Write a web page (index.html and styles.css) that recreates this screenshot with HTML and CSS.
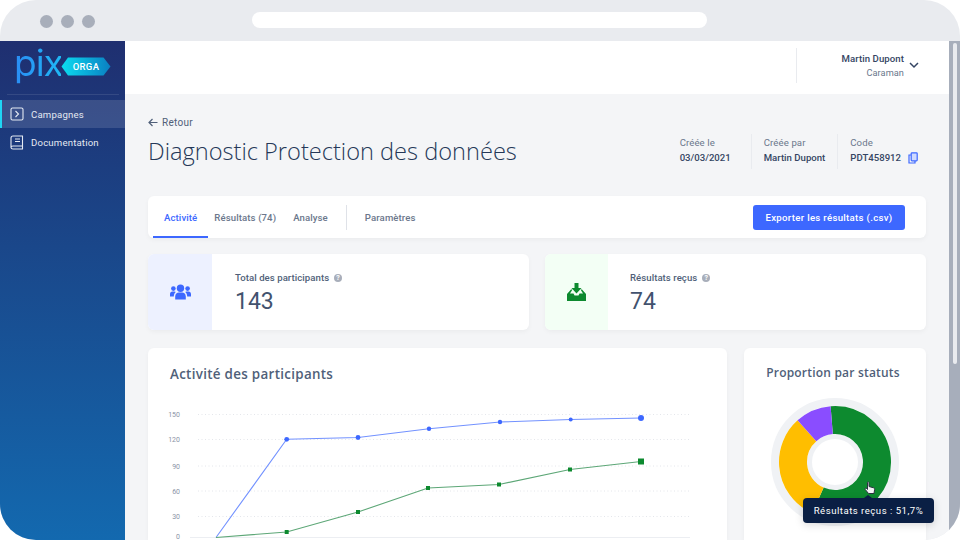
FILE: index.html
```html
<!DOCTYPE html>
<html lang="fr">
<head>
    <meta charset="UTF-8">
    <title>Pix Orga</title>
    <link rel="stylesheet" href="styles.css">
</head>
<body>
    <div class="window">
        <!-- Browser bar -->
        <div class="titlebar">
            <div class="dots">
                <span class="dot"></span>
                <span class="dot"></span>
                <span class="dot"></span>
            </div>
            <div class="address"></div>
        </div>

        <div class="app">
            <!-- Sidebar -->
            <nav class="sidebar">
                <div class="logo">
                    <span class="logo-pix">pix</span>
                    <span class="logo-badge">
                        <svg class="logo-hex" width="50" height="19" viewBox="0 0 50 19">
                            <defs>
                                <linearGradient id="hexGrad" x1="0" y1="0" x2="1" y2="0">
                                    <stop offset="0" stop-color="#0bdcf0"/>
                                    <stop offset="1" stop-color="#0a7fc2"/>
                                </linearGradient>
                            </defs>
                            <path d="M7 0.5H42.5L49.5 9.5L42.5 18.5H7L0.5 9.5Z" fill="url(#hexGrad)"/>
                        </svg>
                        <span class="logo-orga">ORGA</span>
                    </span>
                </div>
                <div class="side-sep"></div>
                <a class="side-link active">
                    <svg width="14" height="14" viewBox="0 0 14 14" fill="none" stroke="#e4e9f2" stroke-width="1.1">
                        <rect x="1" y="1" width="12" height="12" rx="1.5"/>
                        <path d="M5.5 4L8.5 7L5.5 10"/>
                    </svg>
                    Campagnes
                </a>
                <a class="side-link">
                    <svg width="14" height="15" viewBox="0 0 14 15" fill="none" stroke="#e4e9f2" stroke-width="1.1">
                        <path d="M3 1H12.5V11H3C1.8 11 1 11.8 1 12.5S1.8 14 3 14H12.5V11M1 12.5V3C1 1.8 1.8 1 3 1"/>
                        <path d="M5 4H10M5 6.5H10"/>
                    </svg>
                    Documentation
                </a>
            </nav>

            <div class="main">
                <!-- Top header -->
                <header class="topbar">
                    <div class="user">
                        <div class="user-text">
                            <div class="user-name">Martin Dupont</div>
                            <div class="user-org">Caraman</div>
                        </div>
                        <svg width="10" height="7" viewBox="0 0 10 7" fill="none" stroke="#344563" stroke-width="1.5">
                            <path d="M1 1L5 5L9 1"/>
                        </svg>
                    </div>
                </header>

                <div class="content">
                    <a class="back">
                        <svg width="10" height="9" viewBox="0 0 10 9" fill="none" stroke="#505f79" stroke-width="1.2">
                            <path d="M9.5 4.5H1M4.5 1L1 4.5L4.5 8"/>
                        </svg>
                        Retour
                    </a>

                    <div class="page-head">
                        <h1>Diagnostic Protection des données</h1>
                        <div class="meta">
                            <div class="meta-item">
                                <div class="meta-label">Créée le</div>
                                <div class="meta-value">03/03/2021</div>
                            </div>
                            <div class="meta-item">
                                <div class="meta-label">Créée par</div>
                                <div class="meta-value">Martin Dupont</div>
                            </div>
                            <div class="meta-item">
                                <div class="meta-label">Code</div>
                                <div class="meta-value">PDT458912
                                    <svg class="copy" width="10" height="12" viewBox="0 0 10 12" fill="none" stroke="#3d68ff" stroke-width="1.2">
                                        <rect x="3.2" y="0.8" width="6" height="8" rx="0.8" fill="#cfdaff"/>
                                        <path d="M3 3H1V11H7V9"/>
                                    </svg>
                                </div>
                            </div>
                        </div>
                    </div>

                    <!-- Tabs -->
                    <div class="tabs card">
                        <a class="tab active">Activité</a>
                        <a class="tab">Résultats (74)</a>
                        <a class="tab">Analyse</a>
                        <span class="tab-sep"></span>
                        <a class="tab">Paramètres</a>
                        <button class="export">Exporter les résultats (.csv)</button>
                    </div>

                    <!-- Stats -->
                    <div class="stats">
                        <div class="stat card">
                            <div class="stat-icon blue">
                                <svg width="21" height="16" viewBox="0 0 21 16" fill="#3d68ff">
                                    <circle cx="10.5" cy="4.2" r="3.7"/>
                                    <circle cx="3.4" cy="4.6" r="2.3"/>
                                    <circle cx="17.6" cy="4.6" r="2.3"/>
                                    <path d="M5.2 15.5V12.5C5.2 10 7 8.6 8.8 8.6H12.2C14 8.6 15.8 10 15.8 12.5V15.5Z"/>
                                    <path d="M0 12.6V10.2C0 8.6 1 7.6 2.4 7.6H4.5C5 7.6 5.5 7.8 5.8 8.1C4.6 9 3.9 10.4 3.8 12.6Z"/>
                                    <path d="M21 12.6V10.2C21 8.6 20 7.6 18.6 7.6H16.5C16 7.6 15.5 7.8 15.2 8.1C16.4 9 17.1 10.4 17.2 12.6Z"/>
                                </svg>
                            </div>
                            <div class="stat-body">
                                <div class="stat-label">Total des participants <span class="help">?</span></div>
                                <div class="stat-value">143</div>
                            </div>
                        </div>
                        <div class="stat card">
                            <div class="stat-icon green">
                                <svg width="19" height="18" viewBox="0 0 19 18" fill="#0d8a2f">
                                    <path d="M7.5 0H11.5V5H14.5L9.5 10.5L4.5 5H7.5Z"/>
                                    <path d="M4 6.5H5.5L3 10.5H6.5L7.5 12.5H11.5L12.5 10.5H16L13.5 6.5H15L19 11V18H0V11Z"/>
                                </svg>
                            </div>
                            <div class="stat-body">
                                <div class="stat-label">Résultats reçus <span class="help">?</span></div>
                                <div class="stat-value">74</div>
                            </div>
                        </div>
                    </div>

                    <!-- Charts -->
                    <div class="charts">
                        <div class="chart-card card">
                            <h2>Activité des participants</h2>
                            <svg class="line-chart" width="579" height="192" viewBox="148 348 579 192">
                                <g class="grid">
                                    <line x1="198" y1="414.5" x2="690" y2="414.5"/>
                                    <line x1="198" y1="439.5" x2="690" y2="439.5"/>
                                    <line x1="198" y1="466" x2="690" y2="466"/>
                                    <line x1="198" y1="491" x2="690" y2="491"/>
                                    <line x1="198" y1="516.5" x2="690" y2="516.5"/>
                                </g>
                                <line x1="190" y1="537.5" x2="690" y2="537.5" stroke="#eceef2"/>
                                <g class="ticks">
                                    <text x="180" y="417">150</text>
                                    <text x="180" y="442">120</text>
                                    <text x="180" y="469">90</text>
                                    <text x="180" y="494">60</text>
                                    <text x="180" y="519">30</text>
                                    <text x="180" y="539">0</text>
                                </g>
                                <polyline class="line-blue" points="216,537.5 286.7,439.3 358,437.5 429,428.7 500,422 570.7,419.5 641,418"/>
                                <polyline class="line-green" points="216,537.5 286.7,532 358,512 428,488 499,484.5 570,469.5 641,461.5"/>
                                <g fill="#3d68ff">
                                    <circle cx="286.7" cy="439.3" r="2.4"/>
                                    <circle cx="358" cy="437.5" r="2.4"/>
                                    <circle cx="429" cy="428.7" r="2.2"/>
                                    <circle cx="500" cy="422" r="2.2"/>
                                    <circle cx="570.7" cy="419.5" r="2"/>
                                    <circle cx="641" cy="418" r="3"/>
                                </g>
                                <g fill="#0d8a2f">
                                    <rect x="284.7" y="530" width="4" height="4"/>
                                    <rect x="356" y="510" width="4" height="4"/>
                                    <rect x="426" y="486" width="4" height="4"/>
                                    <rect x="497" y="482.5" width="4" height="4"/>
                                    <rect x="568" y="467.5" width="4" height="4"/>
                                    <rect x="638" y="458.5" width="6" height="6"/>
                                </g>
                            </svg>
                        </div>
                        <div class="donut-card card">
                            <h3>Proportion par statuts</h3>
                            <svg class="donut" width="128" height="128" viewBox="-64 -64 128 128">
                                <circle r="60" fill="none" stroke="#f0f2f5" stroke-width="8"/>
                                <circle r="25.5" fill="none" stroke="#eff1f4" stroke-width="5"/>
                                <g fill="none" stroke-width="28" transform="rotate(-94.5)">
                                    <circle r="42" pathLength="360" stroke="#0d8a2f" stroke-dasharray="208.5 151.5"/>
                                    <circle r="42" pathLength="360" stroke="#ffbe00" stroke-dasharray="114 246" stroke-dashoffset="-208.5"/>
                                    <circle r="42" pathLength="360" stroke="#8a4dff" stroke-dasharray="37.5 322.5" stroke-dashoffset="-322.5"/>
                                </g>
                            </svg>
                            <svg class="pointer" width="12" height="14" viewBox="0 0 12 14">
                                <path d="M3.5 1.5C3.5 0.6 5 0.6 5 1.5V5.5L9.5 6.8C10.5 7.1 10.8 7.8 10.6 8.6L10 12.5H4.5L1.2 8.4C0.7 7.6 1.7 6.8 2.4 7.4L3.5 8.4Z" fill="#f4f5f7" stroke="#2a3140" stroke-width="1"/>
                            </svg>
                            <div class="tooltip">Résultats reçus : 51,7%</div>
                        </div>
                    </div>
                </div>
            </div>

            <div class="scrollbar"><div class="thumb"></div></div>
        </div>
    </div>
</body>
</html>
```

FILE: styles.css
```css
/* Global styles */
body {
    margin: 0;
    width: 960px;
    height: 540px;
    overflow: hidden;
    background-color: white;
    font-family: Roboto, "Liberation Sans", sans-serif;
    color: #344563;
}

.window {
    width: 960px;
    height: 540px;
    border-radius: 36px;
    overflow: hidden;
    background-color: #e9ebef;
    display: flex;
    flex-direction: column;
}

/* Browser bar */
.titlebar {
    height: 41px;
    flex-shrink: 0;
    display: flex;
    align-items: center;
    padding-left: 40px;
}

.dots {
    display: flex;
    gap: 8px;
    width: 212px;
    margin-top: 1px;
}

.dot {
    width: 13px;
    height: 13px;
    border-radius: 50%;
    background-color: #a8aeba;
}

.address {
    width: 455px;
    height: 16px;
    margin-top: -1px;
    border-radius: 8px;
    background-color: white;
}

.app {
    flex: 1;
    display: flex;
    min-height: 0;
}

/* Sidebar */
.sidebar {
    width: 125px;
    flex-shrink: 0;
    background: linear-gradient(180deg, #1f2f70 0%, #1369af 100%);
    color: #e4e9f2;
}

.logo {
    height: 48px;
    display: flex;
    align-items: center;
    padding-left: 14px;
}

.logo-pix {
    font-family: Inter, sans-serif;
    font-weight: 400;
    font-size: 37px;
    line-height: 42px;
    letter-spacing: -1px;
    width: 47px;
    margin-top: -4px;
    background: linear-gradient(90deg, #2a8cf5 0%, #1fb8f5 100%);
    -webkit-background-clip: text;
    background-clip: text;
    color: transparent;
}

.logo-badge {
    position: relative;
    width: 50px;
    height: 19px;
    margin-top: 3px;
}

.logo-hex {
    display: block;
}

.logo-orga {
    position: absolute;
    inset: 0;
    text-align: center;
    font-size: 9.5px;
    line-height: 19px;
    font-weight: 500;
    letter-spacing: 0.3px;
    color: white;
}

.side-sep {
    height: 1px;
    margin: 5px 6px 5px 7px;
    background-color: rgba(255, 255, 255, 0.1);
}

.side-link {
    height: 28px;
    display: flex;
    align-items: center;
    gap: 7px;
    padding-left: 10px;
    font-size: 9.6px;
    letter-spacing: 0.18px;
}

.side-link.active {
    background-color: rgba(255, 255, 255, 0.13);
    border-left: 2px solid #1fd6f5;
    padding-left: 8px;
}

/* Main area */
.main {
    flex: 1;
    min-width: 0;
    background-color: #f4f5f7;
    overflow: hidden;
}

.topbar {
    height: 53px;
    background-color: white;
    display: flex;
    justify-content: flex-end;
}

.user {
    width: 153px;
    margin-top: 7px;
    height: 35px;
    border-left: 1px solid #e9ebef;
    display: flex;
    align-items: center;
    justify-content: flex-end;
    gap: 5px;
    padding-right: 30px;
    box-sizing: border-box;
}

.user-text {
    text-align: right;
    font-size: 9.6px;
    letter-spacing: 0.07px;
    margin-top: 1px;
}

.user-name {
    font-weight: 500;
    line-height: 14px;
}

.user-org {
    font-size: 9.2px;
    color: #6b778c;
    line-height: 14px;
}

.content {
    padding: 21px 23px 0;
}

.back {
    display: flex;
    align-items: center;
    gap: 4px;
    font-size: 10px;
    letter-spacing: 0.3px;
    color: #505f79;
    height: 14px;
}

.page-head {
    display: flex;
    justify-content: space-between;
    align-items: flex-start;
    height: 60px;
    margin-top: 7px;
}

h1 {
    margin: 0;
    font-family: "Open Sans", sans-serif;
    font-weight: 300;
    font-size: 23.6px;
    line-height: 30px;
    color: #253858;
}

.meta {
    display: flex;
    margin-top: -2px;
    padding-right: 8px;
}

.meta-item {
    padding: 1px 12px 0;
    border-left: 1px solid #e9ebef;
    font-size: 9.6px;
    height: 34px;
}

.meta-item:first-child {
    border-left: none;
    padding-right: 20px;
}

.meta-item:last-child {
    padding-right: 0;
}

.meta-label {
    color: #6b778c;
    line-height: 15px;
    letter-spacing: 0.1px;
}

.meta-value {
    font-weight: 500;
    line-height: 16px;
    display: flex;
    align-items: center;
    gap: 7px;
}

.card {
    background-color: white;
    border-radius: 6px;
    box-shadow: 0 2px 5px rgba(0, 0, 0, 0.04);
}

/* Tabs */
.tabs {
    height: 42px;
    display: flex;
    align-items: center;
    padding: 0 21px 0 5px;
    margin-bottom: 16px;
}

.tab {
    height: 42px;
    line-height: 42px;
    font-size: 9.6px;
    font-weight: 500;
    letter-spacing: 0.1px;
    color: #6b778c;
    padding: 1px 8.5px 0;
    box-sizing: border-box;
}

.tab.active {
    color: #3d68ff;
    border-bottom: 2px solid #3d68ff;
    padding: 1px 11px 0;
    margin-right: -2.5px;
}

.tab-sep {
    width: 1px;
    height: 25px;
    margin: 0 9.5px;
    background-color: #dfe2e8;
}

.export {
    margin-left: auto;
    width: 152px;
    height: 25px;
    border: none;
    border-radius: 3px;
    background-color: #3d68ff;
    color: white;
    font-family: Roboto, sans-serif;
    font-size: 9.6px;
    font-weight: 500;
    letter-spacing: 0.32px;
}

/* Stat cards */
.stats {
    display: grid;
    grid-template-columns: 381px 381px;
    gap: 16px;
    margin-bottom: 18px;
}

.stat {
    height: 76px;
    display: flex;
    overflow: hidden;
}

.stat-icon {
    width: 63px;
    display: flex;
    align-items: center;
    justify-content: center;
}

.stat-icon.blue {
    width: 64px;
    margin-right: 1px;
    background-color: #edf1ff;
}

.stat-icon.green {
    background-color: #f3fff5;
}

.stat-body {
    padding: 17px 0 0 22px;
}

.stat-label {
    font-size: 9.6px;
    font-weight: 500;
    letter-spacing: 0.05px;
    line-height: 13px;
    color: #505f79;
    display: flex;
    align-items: center;
    gap: 5px;
}

.help {
    width: 8px;
    height: 8px;
    border-radius: 50%;
    background-color: #a8aeba;
    color: white;
    font-size: 7px;
    line-height: 8px;
    text-align: center;
    font-weight: 700;
}

.stat-value {
    font-size: 23px;
    line-height: 27px;
    color: #42526e;
    margin-top: 4px;
}

/* Charts */
.charts {
    display: grid;
    grid-template-columns: 579px 182px;
    gap: 17px;
}

.chart-card {
    height: 192px;
    position: relative;
    overflow: hidden;
    border-radius: 6px 6px 0 0;
}

h2 {
    margin: 0;
    padding: 17px 0 0 22px;
    font-family: "Open Sans", sans-serif;
    font-weight: 600;
    font-size: 13.4px;
    line-height: 19px;
    letter-spacing: 0.3px;
    color: #505f79;
}

.line-chart {
    position: absolute;
    left: 0;
    top: 0;
}

.grid line {
    stroke: #e4e6eb;
    stroke-dasharray: 1 2.5;
}

.ticks text {
    font-size: 7px;
    fill: #8a94a6;
    text-anchor: end;
    font-family: Roboto, sans-serif;
}

.line-blue {
    fill: none;
    stroke: #7392ff;
    stroke-width: 1.1;
}

.line-green {
    fill: none;
    stroke: #5da777;
    stroke-width: 1.1;
}

.donut-card {
    height: 192px;
    position: relative;
    border-radius: 6px 6px 0 0;
}

h3 {
    margin: 0;
    padding: 16px 4px 0 0;
    font-family: "Open Sans", sans-serif;
    font-weight: 600;
    font-size: 12px;
    line-height: 18px;
    letter-spacing: 0.2px;
    text-align: center;
    color: #505f79;
}

.donut {
    position: absolute;
    left: 27px;
    top: 50px;
}

.pointer {
    position: absolute;
    left: 120px;
    top: 133px;
}

.tooltip {
    position: absolute;
    left: 59px;
    top: 150px;
    width: 131px;
    height: 25px;
    line-height: 25px;
    text-align: center;
    border-radius: 4px;
    background-color: #0a1f44;
    color: white;
    font-size: 9.6px;
    letter-spacing: 0.5px;
    box-shadow: 0 2px 8px rgba(0, 0, 0, 0.15);
}

.tooltip::before {
    content: "";
    position: absolute;
    left: 61px;
    top: -3px;
    border-left: 4px solid transparent;
    border-right: 4px solid transparent;
    border-bottom: 3px solid #0a1f44;
}

/* Scrollbar */
.scrollbar {
    width: 11px;
    flex-shrink: 0;
    background-color: #a7aebb;
}

.thumb {
    width: 4px;
    height: 321px;
    margin: 2px 0 0 4px;
    border-radius: 2px;
    background-color: #e9ebef;
}
```
